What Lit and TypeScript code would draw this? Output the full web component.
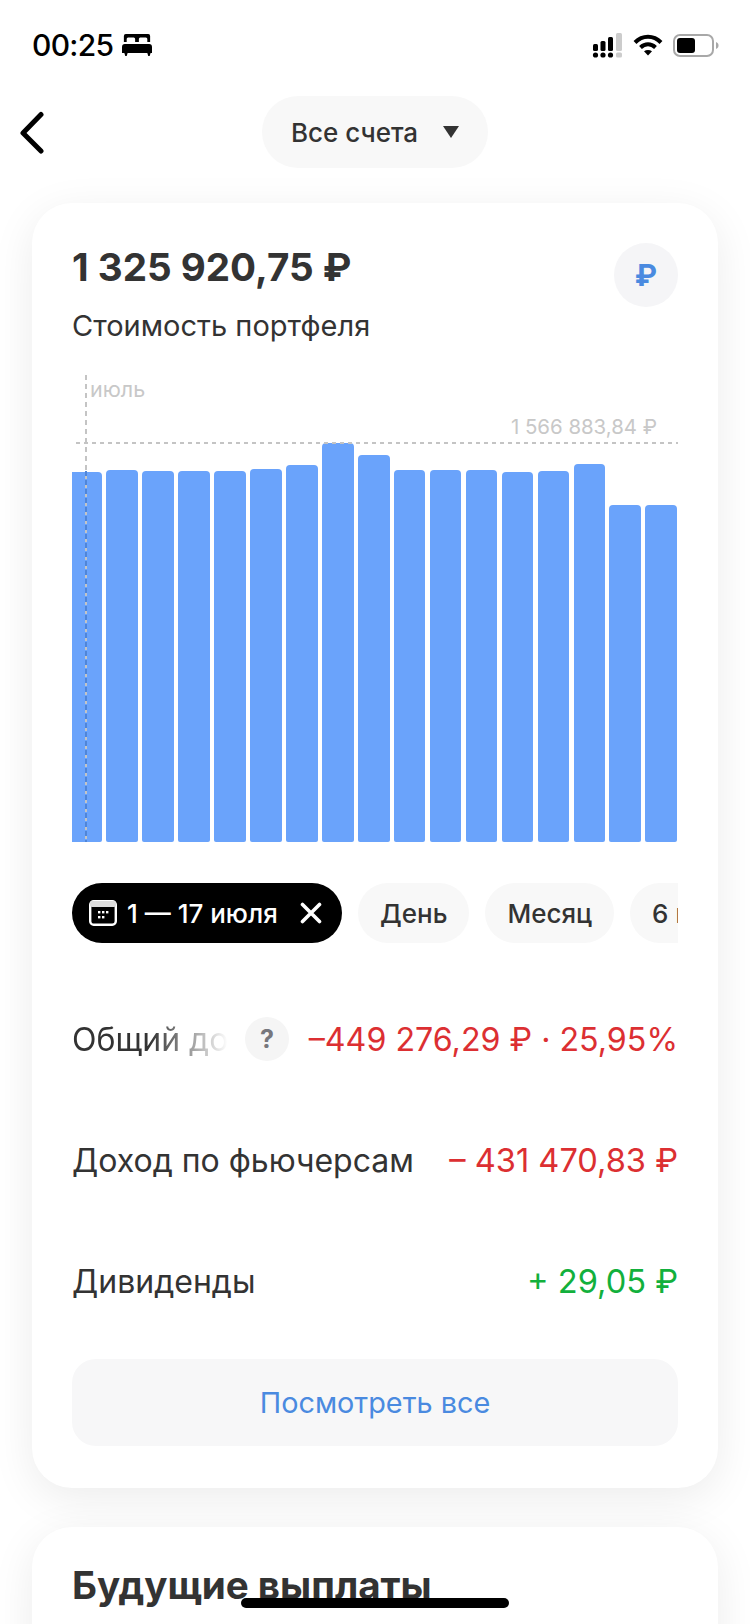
import { LitElement, html, css } from "lit";
import { customElement } from "lit/decorators.js";

const TOPS = [472, 470, 471, 471, 471, 469, 465, 443, 455, 470, 470, 470, 472, 471, 464, 505, 505];
const BASE = 842;

@customElement("app-root")
export class AppRoot extends LitElement {
  static styles = css`
    :host { display: block; width: 750px; height: 1624px; overflow: hidden; position: relative; background: #fff;
      font-family: Inter, Roboto, sans-serif; color: #333; }
    .status { height: 90px; box-sizing: border-box; padding: 26px 31px 0 32px; display: flex; align-items: flex-start; justify-content: space-between; }
    .time { display: flex; align-items: center; gap: 9px; font-size: 30px; line-height: 38px; font-weight: 500; color: #000; letter-spacing: -0.7px;}
    .sys { display: flex; align-items: center; gap: 10px; height: 38px; }
    .nav { height: 113px; display: flex; justify-content: center; position: relative; align-items: flex-start; padding-top: 6px; box-sizing: border-box; }
    .back { position: absolute; left: 18px; top: 20px; }
    .select { width: 226px; height: 72px; border-radius: 36px; background: #f8f8f8; display: flex; align-items: center; justify-content: center; gap: 25px; font-size: 26px; font-weight: 500; }
    .card { margin: 0 32px; background: #fff; border-radius: 40px; box-shadow: 0 10px 44px rgba(0,0,0,.08); padding: 40px; position: relative; }
    .first { height: 1285px; box-sizing: border-box; }
    .second { margin-top: 39px; padding-top: 34px; height: 300px; box-sizing: border-box; }
    .head { display: flex; justify-content: space-between; align-items: flex-start; }
    .total { font-size: 38.6px; line-height: 48px; font-weight: 700; }
    .sub { font-size: 29px; line-height: 36px; margin-top: 17px; }
    .rub { width: 64px; height: 64px; border-radius: 50%; background: #f5f5f7; color: #4a8ae0; font-size: 30px; font-weight: 700; display: flex; align-items: center; justify-content: center; }
    .chart { position: relative; height: 470px; margin-top: 28px; }
    .bars { position: absolute; inset: 0 1px 0 0; display: flex; justify-content: space-between; align-items: flex-end; }
    .bar { width: 31.6px; background: #6aa3fb; border-radius: 4px 4px 2px 2px; }
    .bar.clip { width: 30px; border-radius: 0 4px 2px 0; }
    .vline { position: absolute; left: 13px; top: 3px; bottom: 0; width: 2px; background: repeating-linear-gradient(180deg, #c4c4c4 0 5px, transparent 5px 9px); }
    .vblue { position: absolute; left: 13px; bottom: 0; height: 371px; width: 2px; background: repeating-linear-gradient(180deg, #4f85d8 0 5px, transparent 5px 9px); }
    .hline { position: absolute; left: 4px; right: 0; top: 70px; height: 2px; background: repeating-linear-gradient(90deg, #c4c4c4 0 4px, transparent 4px 8px); }
    .month { position: absolute; left: 18px; top: 5px; font-size: 21.5px; line-height: 24px; color: #c8c8c8; }
    .max { position: absolute; right: 21px; top: 43px; font-size: 20.4px; line-height: 24px; color: #c8c8c8; }
    .chips { display: flex; gap: 16px; margin-top: 41px; overflow: hidden; }
    .chip { flex: none; height: 60px; border-radius: 30px; background: #f8f8f8; display: flex; align-items: center; padding: 0 22px; font-size: 26px; font-weight: 500; }
    .chip.on { background: #000; color: #fff; padding: 0 20px 0 17px; gap: 10px; width: 270px; box-sizing: border-box; }
    .chip.on .range { flex: 1; }
    .rows { margin-top: 73px; display: flex; flex-direction: column; gap: 75px; }
    .row { display: flex; align-items: center; height: 46px; font-size: 32px; justify-content: space-between; white-space: nowrap; }
    .fade { width: 156px; overflow: hidden; -webkit-mask-image: linear-gradient(90deg, #000 50%, transparent 100%); mask-image: linear-gradient(90deg, #000 50%, transparent 100%); }
    .help { width: 44px; height: 44px; margin-left: 17px; border-radius: 50%; background: #f5f5f5; color: #77777d; font-size: 25px; font-weight: 700; display: flex; align-items: center; justify-content: center; flex: none; }
    .value { margin-left: auto; font-size: 32.6px; }
    .value.tight { font-size: 32.2px; }
    .neg { color: #dc2f32; }
    .pos { color: #12b03c; }
    .btn { margin-top: 55px; height: 87px; border-radius: 24px; background: #f7f7f8; color: #4a8ae0; font-size: 28.8px; display: flex; align-items: center; justify-content: center; }
    h2 { margin: 0; font-size: 38.6px; line-height: 48px; font-weight: 700; }
    .home { position: absolute; left: 241px; top: 1598px; width: 268px; height: 10px; border-radius: 5px; background: #000; }
  `;

  render() {
    return html`
      <div class="status">
        <div class="time">00:25
          <svg width="30" height="22" viewBox="0 0 32 22" preserveAspectRatio="none" fill="#000"><path d="M4 0h24a2 2 0 0 1 2 2v6h-3V5a1.500 1.500 0 0 0-1.500-1.500h-6A1.500 1.500 0 0 0 18 5v3h-4V5a1.500 1.500 0 0 0-1.500-1.500h-6A1.500 1.500 0 0 0 5 5v3H2V2a2 2 0 0 1 2-2zM3 10h26a3 3 0 0 1 3 3v6h-1.500l-1 3h-1.500l-1-3H6l-1 3H3.500l-1-3H0v-6a3 3 0 0 1 3-3z"/></svg>
        </div>
        <div class="sys">
          <svg width="31" height="25" viewBox="0 0 31 25">
            <g fill="#000"><rect x="1" y="11" width="5" height="7" rx="1.500"/><rect x="8.500" y="8" width="5" height="10" rx="1.500"/><rect x="16" y="4" width="5" height="14" rx="1.500"/>
            <circle cx="3.500" cy="22" r="2.600"/><circle cx="11" cy="22" r="2.600"/><circle cx="18.500" cy="22" r="2.600"/></g>
            <g fill="#ccc"><rect x="24" y="0" width="6" height="18" rx="1.500"/><rect x="24" y="19.500" width="6" height="5" rx="1.500"/></g>
          </svg>
          <svg width="30" height="22" viewBox="0 0 30 22" fill="none" stroke="#000" stroke-width="4"><path d="M2 8.500C9.500 .8 20.500 .8 28 8.500"/><path d="M7.500 13.500c4.500-4.300 10.500-4.300 15 0"/><path d="M15 21.500l-4-4.200c2.400-1.900 5.600-1.900 8 0z" fill="#000" stroke="none"/></svg>
          <svg width="46" height="23" viewBox="0 0 46 23" fill="none"><rect x="1" y="1" width="39" height="21" rx="6" stroke="#a8a8a8" stroke-width="2"/><rect x="4" y="4" width="18" height="15" rx="3" fill="#000"/><path d="M43 8c2 .8 2.500 1.800 2.500 3.500S45 14.200 43 15z" fill="#a8a8a8"/></svg>
        </div>
      </div>
      <div class="nav">
        <svg class="back" width="28" height="44" viewBox="0 0 28 44" fill="none" stroke="#000" stroke-width="5" stroke-linecap="round" stroke-linejoin="round"><path d="M23 4.500L5 23l18 18"/></svg>
        <div class="select">Все счета
          <svg width="16" height="12" viewBox="0 0 16 12" fill="#333"><path d="M0 0h16L8 12z"/></svg>
        </div>
      </div>
      <div class="card first">
        <div class="head">
          <div>
            <div class="total">1 325 920,75 ₽</div>
            <div class="sub">Стоимость портфеля</div>
          </div>
          <div class="rub">₽</div>
        </div>
        <div class="chart">
          <div class="bars">
            ${TOPS.map((t, i) => html`<div class="bar ${i === 0 ? "clip" : ""}" style="height:${BASE - t}px"></div>`)}
          </div>
          <div class="vline"></div>
          <div class="vblue"></div>
          <div class="hline"></div>
          <div class="month">июль</div>
          <div class="max">1 566 883,84 ₽</div>
        </div>
        <div class="chips">
          <div class="chip on">
            <svg width="28" height="26" viewBox="0 0 28 26" fill="none"><rect x="1.200" y="1.200" width="25.600" height="23.600" rx="3.500" stroke="#fff" stroke-width="2.400"/><rect x="1" y="1" width="26" height="6" rx="2" fill="#ddd"/><g fill="#fff"><rect x="9" y="11" width="2.400" height="2.400"/><rect x="13" y="11" width="2.400" height="2.400"/><rect x="17" y="11" width="2.400" height="2.400"/><rect x="9" y="16" width="2.400" height="2.400"/><rect x="13" y="16" width="2.400" height="2.400"/></g></svg>
            <span class="range">1 — 17 июля</span>
            <svg width="22" height="22" viewBox="0 0 22 22" fill="none" stroke="#fff" stroke-width="3.600" stroke-linecap="round"><path d="M2.500 2.500l17 17M19.500 2.500l-17 17"/></svg>
          </div>
          <div class="chip">День</div>
          <div class="chip">Месяц</div>
          <div class="chip">6 мес</div>
        </div>
        <div class="rows">
          <div class="row">
            <div class="fade">Общий доход</div>
            <div class="help">?</div>
            <div class="value tight neg">–449 276,29 ₽ · 25,95%</div>
          </div>
          <div class="row"><div>Доход по фьючерсам</div><div class="value neg">– 431 470,83 ₽</div></div>
          <div class="row"><div>Дивиденды</div><div class="value pos">+ 29,05 ₽</div></div>
        </div>
        <div class="btn">Посмотреть все</div>
      </div>
      <div class="card second"><h2>Будущие выплаты</h2></div>
      <div class="home"></div>
    `;
  }
}
